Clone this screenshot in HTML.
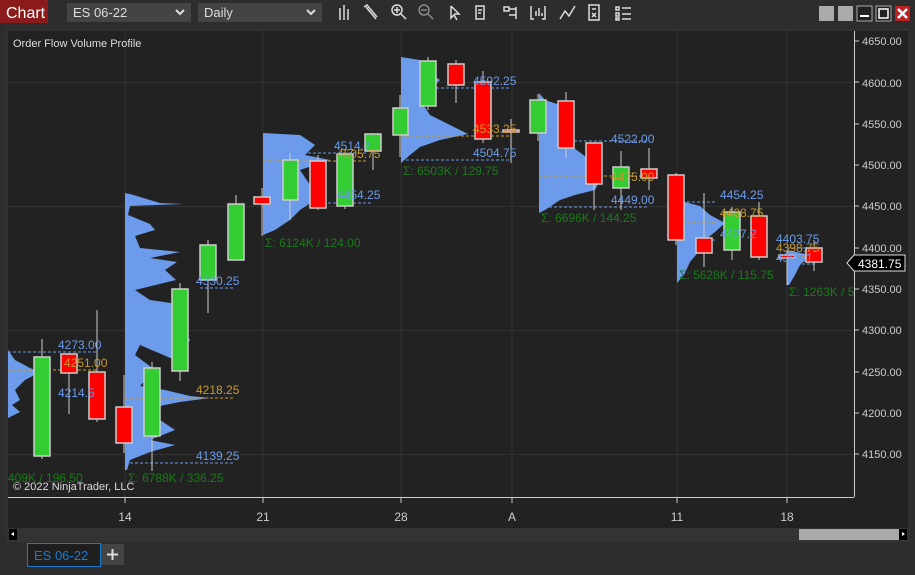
<!DOCTYPE html>
<html><head><meta charset="utf-8"><style>
html,body{margin:0;padding:0;background:#2d2d2d;width:915px;height:575px;overflow:hidden;font-family:"Liberation Sans",sans-serif}
svg{display:block}
</style></head><body>
<svg width="915" height="575" xmlns="http://www.w3.org/2000/svg" font-family="Liberation Sans, sans-serif">
<rect width="915" height="575" fill="#2d2d2d"/>
<rect x="0" y="0" width="48" height="23" fill="#8b1a1a"/>
<text x="6" y="18" font-size="16" fill="#fff">Chart</text>
<rect x="67" y="3" width="124" height="19" fill="#444"/>
<text x="73" y="17" font-size="13" fill="#ddd">ES 06-22</text>
<path d="M176 10 l4 4 l4 -4" stroke="#ddd" stroke-width="2" fill="none"/>
<rect x="198" y="3" width="124" height="19" fill="#444"/>
<text x="204" y="17" font-size="13" fill="#ddd">Daily</text>
<path d="M307 10 l4 4 l4 -4" stroke="#ddd" stroke-width="2" fill="none"/>
<g stroke="#ddd" stroke-width="1.5" fill="none">
<path d="M340 8v12M344 5v15M348 9v11"/>
<path d="M366 7l10 12M364 7l3 -2l10 12"/>
<circle cx="397" cy="10" r="5"/><path d="M401 14l5 5M394 10h6M397 7v6"/>
<g stroke="#888"><circle cx="424" cy="10" r="5"/><path d="M428 14l5 5M421 10h6"/></g>
<path d="M451 6l0 12l3 -3l3 5M451 6l8 8h-5"/>
<path d="M476 6h8v13h-8z M478 10h4M478 13h3"/>
<path d="M504 7h5v4h-5zM509 9h7M509 15h7v4M516 7v12"/>
<path d="M531 6v13h3M545 6v13h-3M536 16v-5M539 16v-8M542 16v-3"/>
<path d="M560 19l5 -8l4 5l6 -10"/>
<path d="M589 5h10v15h-10zM592 9h4M592 13l4 4M596 13l-4 4"/>
<path d="M616 7h3v3h-3zM616 13h3v3h-3zM616 18h3v2h-3zM622 8h9M622 14h9M622 19h9"/>
</g>
<rect x="819" y="6" width="15" height="15" fill="#aaa"/>
<rect x="838" y="6" width="15" height="15" fill="#aaa"/>
<rect x="857" y="6" width="15" height="15" fill="#222" stroke="#aaa"/><rect x="860" y="15" width="9" height="2" fill="#fff"/>
<rect x="876" y="6" width="15" height="15" fill="#222" stroke="#aaa"/><rect x="879" y="9" width="9" height="9" fill="none" stroke="#fff" stroke-width="1.5"/>
<rect x="895" y="6" width="15" height="15" fill="#b22"/><path d="M898 9l9 9M907 9l-9 9" stroke="#fff" stroke-width="2.5"/>
<rect x="7" y="30" width="902" height="511" fill="#222" stroke="#3a3a3a"/>
<rect x="8" y="31" width="846" height="466" fill="#222"/>
<g stroke="#333" stroke-width="1">
<path d="M125 31v466M263 31v466M401 31v466M512 31v466M677 31v466M787 31v466"/>
<path d="M8 82.5h846M8 206.5h846M8 330.5h846M8 454.5h846"/>
</g>
<g fill="#6b9bea">
<polygon points="8,350 15,360 30,368 40,372 25,380 15,390 20,400 12,405 20,412 8,418"/>
<polygon points="125,193 130,194 160,203 183,204 130,206 128,215 150,224 155,230 135,236 140,248 180,252 150,258 177,262 165,270 176,280 135,290 150,300 185,305 175,320 190,340 175,360 140,345 135,355 155,370 140,386 165,390 190,396 210,398 180,402 150,408 160,420 175,430 150,440 175,445 150,452 130,460 127,470 125,470"/>
<polygon points="263,133 300,135 315,145 305,155 330,160 300,170 310,185 315,200 300,210 290,220 275,230 263,235"/>
<polygon points="401,57 420,60 425,70 440,80 430,90 420,100 430,115 450,125 468,134 440,140 420,147 410,155 401,163"/>
<polygon points="539,93 545,100 560,105 565,120 560,130 570,145 590,160 585,172 600,180 595,190 575,195 560,200 545,210 539,213"/>
<polygon points="677,200 700,206 710,215 725,223 715,232 705,240 700,250 690,262 684,275 677,283"/>
<polygon points="787,250 810,255 800,265 795,275 789,285 787,285"/>
</g>
<g stroke-dasharray="3,2" stroke-width="1" fill="none">
<path d="M8 352h90M125 463h110M200 288h35M263 153h105M263 203h110M401 88h110M401 160h110M539 141h108M539 207h108M677 202h40M677 240h40M787 248h30M787 264h30" stroke="#6b9bea"/>
<path d="M8 370h90M125 398h110M263 161h105M401 136h110M539 176h108M677 223h40M787 256h30" stroke="#c89a2a"/>
</g>
<g stroke="#ccc" stroke-width="1">
<path d="M42 339v120M69 353v61M97 310v112M124 375v78M152 362v109M180 283v98M208 240v73M236 195v65M262 188v48M290 153v67M318 155v55M345 150v59M373 133v37M400 95v62M428 57v53M456 60v43M483 71v72M511 119v44M538 94v47M566 92v66M594 142v68M621 151v59M649 148v42M676 173v72M704 193v74M732 207v53M759 202v58M787 250v35M814 240v31"/>
</g>
<g stroke="#ccc" stroke-width="1.5">
<rect x="34" y="357" width="16" height="99" fill="#33cc33"/>
<rect x="61" y="354" width="16" height="19" fill="#f00"/>
<rect x="89" y="372" width="16" height="47" fill="#f00"/>
<rect x="116" y="407" width="16" height="36" fill="#f00"/>
<rect x="144" y="368" width="16" height="68" fill="#33cc33"/>
<rect x="172" y="289" width="16" height="82" fill="#33cc33"/>
<rect x="200" y="245" width="16" height="35" fill="#33cc33"/>
<rect x="228" y="204" width="16" height="56" fill="#33cc33"/>
<rect x="254" y="197" width="16" height="7" fill="#f00"/>
<rect x="283" y="160" width="15" height="40" fill="#33cc33"/>
<rect x="310" y="161" width="16" height="47" fill="#f00"/>
<rect x="337" y="154" width="16" height="52" fill="#33cc33"/>
<rect x="365" y="134" width="16" height="17" fill="#33cc33"/>
<rect x="393" y="108" width="15" height="27" fill="#33cc33"/>
<rect x="420" y="61" width="16" height="45" fill="#33cc33"/>
<rect x="448" y="64" width="16" height="21" fill="#f00"/>
<rect x="475" y="82" width="16" height="57" fill="#f00"/>
<rect x="503" y="130" width="16" height="2" fill="#f00"/>
<rect x="530" y="100" width="16" height="33" fill="#33cc33"/>
<rect x="558" y="101" width="16" height="47" fill="#f00"/>
<rect x="586" y="143" width="16" height="41" fill="#f00"/>
<rect x="613" y="167" width="16" height="21" fill="#33cc33"/>
<rect x="641" y="169" width="16" height="9" fill="#f00"/>
<rect x="668" y="175" width="16" height="65" fill="#f00"/>
<rect x="696" y="238" width="16" height="15" fill="#f00"/>
<rect x="724" y="212" width="16" height="38" fill="#33cc33"/>
<rect x="751" y="216" width="16" height="41" fill="#f00"/>
<rect x="779" y="255" width="16" height="3" fill="#f00"/>
<rect x="806" y="248" width="16" height="14" fill="#f00"/>
</g>
<g font-size="12" fill="#6b9bea">
<text x="58" y="349">4273.00</text><text x="58" y="397">4214.5</text>
<text x="196" y="285">4330.25</text><text x="196" y="460">4139.25</text>
<text x="334" y="150">4514.7</text><text x="337" y="199">4454.25</text>
<text x="473" y="85">4592.25</text><text x="473" y="157">4504.75</text>
<text x="611" y="143">4522.00</text><text x="611" y="204">4449.00</text>
<text x="720" y="199">4454.25</text><text x="720" y="238">4427.2</text>
<text x="776" y="243">4403.75</text><text x="776" y="262">4386.1</text>
</g>
<g font-size="12" fill="#c89a2a">
<text x="64" y="367">4251.00</text><text x="196" y="394">4218.25</text>
<text x="337" y="158">4505.75</text><text x="473" y="133">4533.25</text>
<text x="611" y="181">4475.00</text><text x="720" y="217">4438.75</text>
<text x="776" y="252">4398.75</text>
</g>
<g font-size="12" fill="#1a7a1a">
<text x="8" y="482">409K / 196.50</text><text x="128" y="482">Σ: 6788K / 336.25</text>
<text x="265" y="247">Σ: 6124K / 124.00</text><text x="403" y="175">Σ: 6503K / 129.75</text>
<text x="541" y="222">Σ: 6696K / 144.25</text><text x="679" y="279">Σ: 5628K / 115.75</text>
<text x="789" y="296">Σ: 1263K / 5</text>
</g>
<text x="13" y="47" font-size="11" fill="#ddd">Order Flow Volume Profile</text>
<text x="13" y="490" font-size="11" fill="#ddd">© 2022 NinjaTrader, LLC</text>
<path d="M8 497.5h846M854.5 31v466" stroke="#ccc"/>
<g stroke="#ccc"><path d="M125 497v6M263 497v6M401 497v6M512 497v6M677 497v6M787 497v6"/>
<path d="M854 41h5M854 82h5M854 124h5M854 165h5M854 206h5M854 248h5M854 289h5M854 330h5M854 372h5M854 413h5M854 454h5"/></g>
<g font-size="11" fill="#ccc">
<text x="862" y="45">4650.00</text><text x="862" y="87">4600.00</text><text x="862" y="128">4550.00</text>
<text x="862" y="169">4500.00</text><text x="862" y="210">4450.00</text><text x="862" y="252">4400.00</text>
<text x="862" y="293">4350.00</text><text x="862" y="334">4300.00</text><text x="862" y="376">4250.00</text>
<text x="862" y="417">4200.00</text><text x="862" y="458">4150.00</text>
</g>
<g font-size="12" fill="#ccc" text-anchor="middle">
<text x="125" y="521">14</text><text x="263" y="521">21</text><text x="401" y="521">28</text>
<text x="512" y="521">A</text><text x="677" y="521">11</text><text x="787" y="521">18</text>
</g>
<path d="M847 263l7 -8h51v16h-51z" fill="#000" stroke="#ddd"/>
<text x="858" y="268" font-size="12" fill="#fff">4381.75</text>
<rect x="8" y="528" width="900" height="13" fill="#333"/>
<rect x="9" y="529" width="8" height="11" fill="#000"/><path d="M11 534l3 -2v4z" fill="#fff"/>
<rect x="799" y="529" width="100" height="11" fill="#aaa"/>
<rect x="899" y="529" width="8" height="11" fill="#000"/><path d="M905 534l-3 -2v4z" fill="#fff"/>
<rect x="27.5" y="543.5" width="73" height="23" fill="#1f1f1f" stroke="#1a7acc"/>
<text x="34" y="560" font-size="13" fill="#1a7acc">ES 06-22</text>
<rect x="101" y="544" width="23" height="21" fill="#444"/>
<path d="M107 554.5h11M112.5 549v11" stroke="#ddd" stroke-width="2"/>
</svg>
</body></html>
